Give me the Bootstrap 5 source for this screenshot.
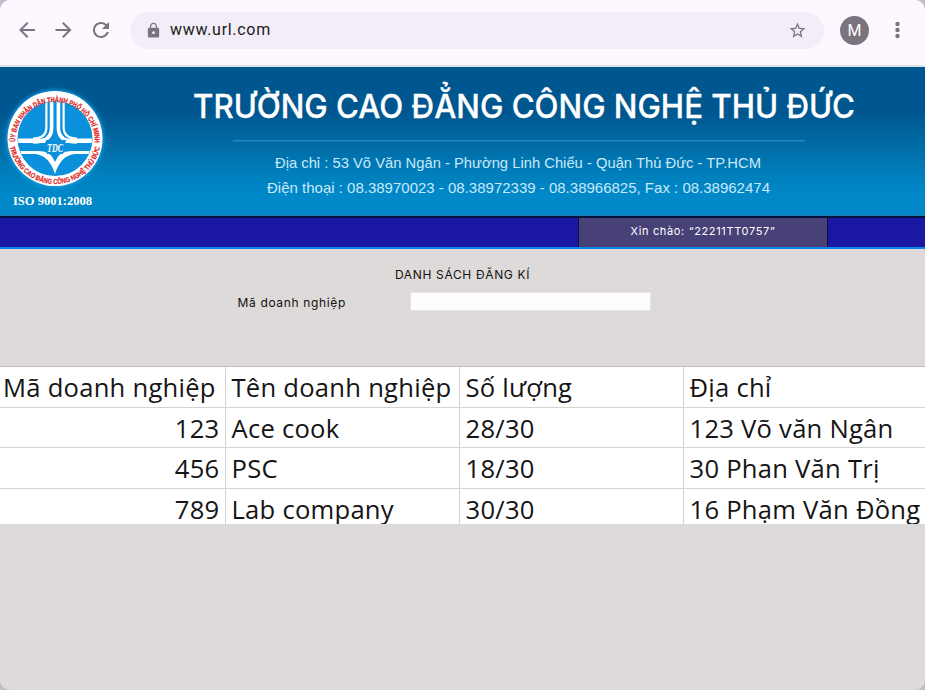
<!DOCTYPE html>
<html lang="vi">
<head>
<meta charset="utf-8">
<meta name="viewport" content="width=device-width, initial-scale=1">
<title>Danh sách đăng kí</title>
<link href="https://cdn.jsdelivr.net/npm/bootstrap@5.3.0/dist/css/bootstrap.min.css" rel="stylesheet">
<style>
html,body{height:100%}
body{background:#c3bdcb;font-family:Inter,sans-serif;overflow:hidden;color:#111}
.window{height:690px;background:#dedad9;border-radius:10px;overflow:hidden}
.toolbar{height:67px;background:#fef7ff;border-bottom:2px solid #e6e0e9;padding:0 0 5px 15px}
.toolbar svg{display:block}
.forward{margin:0 14px 0 12px}
.address{width:694px;height:37px;background:#f2edf7;margin-left:17px;padding:0 17px 0 15px}
.url{font:400 16px/24px Roboto,sans-serif;letter-spacing:.7px;color:#1d1b20}
.avatar{width:29px;height:29px;background:#79747e;color:#fff;font:400 16px Roboto,sans-serif;margin-left:16px}
.banner{height:149px;background:linear-gradient(#00568f 0,#00568f 30%,#0069a3 50%,#0080bd 73%,#0088c9 86%,#0088c9);}
.banner svg{display:block}
.menu{height:33px;background:#1917a3;border-top:2px solid #02143c;border-bottom:2px solid #0a84ea}
.hello{width:250px;margin-left:578px;background:#484177;border:solid #111238;border-width:0 1px;color:#fff;font-size:11px;line-height:26px;letter-spacing:.65px}
.search{height:117px;font-size:12px;letter-spacing:.65px}
.search h1{font-size:12px;line-height:16px;letter-spacing:.65px;padding-top:18px}
.search form{padding:9px 37px 0 0}
.search label{width:172px;line-height:16px;padding-top:2px}
.search input{width:241px;height:19px;min-height:0;background:#fdfdfd;border:1px solid #e8e4e4}
.companies{height:158px;overflow:hidden;border-top:1px solid #bdbdbd;background:#fff}
.companies table{table-layout:fixed;width:926px;font:400 25.6px/29px "Open Sans",Carlito,sans-serif;letter-spacing:.25px}
.companies .table>:not(caption)>*>*{padding:6px 0 0 6px;height:40.4px;line-height:29px;vertical-align:top;font-weight:400;border:solid #d3d3d3;border-width:0 1px 1px 0;white-space:nowrap;color:#151515;background:#fff}
.companies .table>tbody>tr>td:first-child{padding-right:5px}
.companies .table>thead>tr>th:first-child{padding-left:3px}
.companies .table>tbody>tr:last-child>td{height:36px;border-bottom:0}
</style>
<script src="https://cdn.jsdelivr.net/npm/bootstrap@5.3.0/dist/js/bootstrap.bundle.min.js"></script>
</head>
<body>
<div class="window">
  <div class="toolbar d-flex align-items-center">
    <svg width="24" height="24" viewBox="0 0 24 24" fill="#79747e"><path d="M20 11H7.830l5.590-5.590L12 4l-8 8 8 8 1.410-1.410L7.830 13H20v-2z"/></svg>
    <svg class="forward" width="24" height="24" viewBox="-4.500 0 24 24" fill="#79747e"><path d="M8 4 6.590 5.410 12.170 11H0v2h12.170l-5.580 5.590L8 20l8-8z"/></svg>
    <svg width="24" height="24" viewBox="0 0 24 24" fill="#79747e"><path d="M17.650 6.350C16.200 4.900 14.210 4 12 4c-4.420 0-7.990 3.580-7.990 8s3.570 8 7.990 8c3.730 0 6.840-2.550 7.730-6h-2.080c-.82 2.330-3.040 4-5.650 4-3.310 0-6-2.690-6-6s2.690-6 6-6c1.660 0 3.140.69 4.220 1.780L13 11h7V4l-2.350 2.350z"/></svg>
    <div class="address rounded-pill d-flex align-items-center">
      <svg width="17" height="17" viewBox="0 0 24 24" fill="#79747e"><path fill-rule="evenodd" d="M18 8h-1V6c0-2.760-2.240-5-5-5S7 3.240 7 6v2H6c-1.100 0-2 .9-2 2v10c0 1.100.9 2 2 2h12c1.100 0 2-.9 2-2V10c0-1.100-.9-2-2-2zm-6 9c-1.100 0-2-.9-2-2s.9-2 2-2 2 .9 2 2-.9 2-2 2zM8.700 8V6a3.300 3.300 0 0 1 6.600 0v2z"/></svg>
      <span class="url ms-2">www.url.com</span>
      <svg class="ms-auto" width="19" height="19" viewBox="0 0 24 24" fill="#79747e"><path d="M22 9.240l-7.190-.62L12 2 9.190 8.630 2 9.240l5.460 4.730L5.820 21 12 17.270 18.180 21l-1.630-7.030L22 9.240zM12 15.400l-3.760 2.270 1-4.280-3.320-2.880 4.380-.38L12 6.100l1.710 4.040 4.380.38-3.320 2.880 1 4.280L12 15.400z"/></svg>
    </div>
    <div class="avatar rounded-circle d-flex align-items-center justify-content-center">M</div>
    <svg class="ms-3" width="24" height="24" viewBox="0 0 24 24" fill="#79747e"><circle cx="12.500" cy="6" r="2.200"/><circle cx="12.500" cy="12" r="2.200"/><circle cx="12.500" cy="18" r="2.200"/></svg>
  </div>

  <header class="banner">
    <svg width="925" height="149" viewBox="0 67 925 149">
      <defs>
        <path id="arcTop" d="M15.100 142A39.900 39.900 0 1 1 94.900 142"/>
        <path id="arcBottom" d="M9.700 146A46 46 0 0 0 100.300 146"/>
        <clipPath id="disc"><circle cx="55" cy="138.500" r="37"/></clipPath>
        <filter id="glow" x="-20%" y="-20%" width="140%" height="140%"><feGaussianBlur stdDeviation="2"/></filter>
      </defs>
      <circle cx="55" cy="138.500" r="48.500" fill="#13a0ea" filter="url(#glow)"/>
      <circle cx="55" cy="138.500" r="47.500" fill="#fff"/>
      <circle cx="55" cy="138.500" r="37.500" fill="#0b91dc"/>
      <g clip-path="url(#disc)">
        <g fill="none" stroke="#fff">
          <path stroke-width="3.600" d="M51.600 98V128Q51.600 142 33 142M58.400 98V128Q58.400 142 77 142"/>
          <path stroke-width="2.200" d="M46.400 98V127Q46.400 138.500 33 138.500M63.600 98V127Q63.600 138.500 77 138.500"/>
        </g>
        <path fill="#fff" d="M16 138.500H46L45 143H16zM94 138.500H64L65 143H94zM16 151H39Q51 151 55 162Q59 151 71 151H94V154H75Q61 155 55 174Q49 155 35 154H16z"/>
      </g>
      <path d="M46 140H66L63 154H47z" fill="#0b91dc"/>
      <text x="47" y="151.500" font-family="Liberation Serif,serif" font-weight="700" font-style="italic" font-size="12" fill="#fff" textLength="16" lengthAdjust="spacingAndGlyphs">TDC</text>
      <g font-family="Liberation Sans,sans-serif" font-weight="700" fill="#e01f26" stroke="#e01f26" stroke-width=".2">
        <text font-size="7.300"><textPath href="#arcTop" startOffset="0" textLength="126" lengthAdjust="spacingAndGlyphs">ỦY BAN NHÂN DÂN THÀNH PHỐ HỒ CHÍ MINH</textPath></text>
        <text font-size="7.200"><textPath href="#arcBottom" startOffset="1" textLength="126" lengthAdjust="spacingAndGlyphs">TRƯỜNG CAO ĐẲNG CÔNG NGHỆ THỦ ĐỨC</textPath></text>
      </g>
      <text x="13" y="205" font-family="Liberation Serif,serif" font-weight="700" font-size="11.500" fill="#fff" textLength="79" lengthAdjust="spacingAndGlyphs">ISO 9001:2008</text>
      <text x="193" y="117.500" font-family="Inter,sans-serif" font-weight="500" font-size="32.500" fill="#fff" stroke="#fff" stroke-width=".3" textLength="662" lengthAdjust="spacingAndGlyphs">TRƯỜNG CAO ĐẲNG CÔNG NGHỆ THỦ ĐỨC</text>
      <path d="M233 140.700H805" stroke="#2587bf" stroke-width="1.600"/>
      <g font-family="Liberation Sans,sans-serif" font-size="15" fill="#c9e9fa">
        <text x="275" y="168" textLength="486" lengthAdjust="spacingAndGlyphs">Địa chỉ : 53 Võ Văn Ngân - Phường Linh Chiểu - Quận Thủ Đức - TP.HCM</text>
        <text x="267" y="193" textLength="503" lengthAdjust="spacingAndGlyphs">Điện thoại : 08.38970023 - 08.38972339 - 08.38966825, Fax : 08.38962474</text>
      </g>
      <path d="M0 215.600H925" stroke="#247fae" stroke-width="1"/>
    </svg>
  </header>

  <nav class="menu d-flex">
    <div class="hello text-center">Xin chào: “22211TT0757”</div>
  </nav>

  <main>
    <section class="search">
      <h1 class="text-center fw-normal mb-0">DANH SÁCH ĐĂNG KÍ</h1>
      <form class="d-flex justify-content-center align-items-center">
        <label for="company">Mã doanh nghiệp</label>
        <input id="company" class="form-control rounded-0 p-0" type="text">
      </form>
    </section>
    <div class="companies">
      <table class="table mb-0">
        <colgroup><col style="width:225px"><col style="width:234px"><col style="width:224px"><col style="width:243px"></colgroup>
        <thead><tr><th>Mã doanh nghiệp</th><th>Tên doanh nghiệp</th><th>Số lượng</th><th>Địa chỉ</th></tr></thead>
        <tbody>
          <tr><td class="text-end">123</td><td>Ace cook</td><td>28/30</td><td>123 Võ văn Ngân</td></tr>
          <tr><td class="text-end">456</td><td>PSC</td><td>18/30</td><td>30 Phan Văn Trị</td></tr>
          <tr><td class="text-end">789</td><td>Lab company</td><td>30/30</td><td>16 Phạm Văn Đồng</td></tr>
        </tbody>
      </table>
    </div>
  </main>
</div>
</body>
</html>
